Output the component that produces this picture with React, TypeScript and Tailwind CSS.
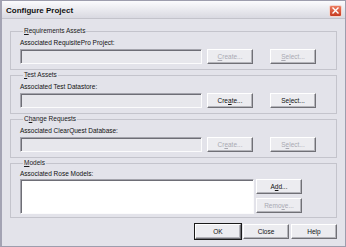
import React from "react";

const font = { fontFamily: '"Liberation Sans", Arial, sans-serif' };

function U({ t, i }: { t: string; i: number }) {
  return (
    <>
      {t.slice(0, i)}
      <span className="underline underline-offset-[1px]">{t[i]}</span>
      {t.slice(i + 1)}
    </>
  );
}

function Btn({
  children,
  disabled,
  def,
}: {
  children: React.ReactNode;
  disabled?: boolean;
  def?: boolean;
}) {
  return (
    <div
      className={`w-[46px] h-[15px] shrink-0 flex items-center justify-center bg-[#ececf0] text-[6.5px] leading-[8px] border-t border-l border-t-[#ffffff] border-l-[#ffffff] border-b border-r border-b-[#707076] border-r-[#707076] shadow-[inset_-1px_-1px_0_#b4b4ba] ${
        disabled ? "text-[#a9a9b2]" : "text-[#111]"
      } ${def ? "outline outline-1 outline-[#1a1a1a]" : ""}`}
    >
      {children}
    </div>
  );
}

function Field({ white, className = "" }: { white?: boolean; className?: string }) {
  return (
    <div
      className={`${className} border-t border-l border-t-[#a4a4ac] border-l-[#a4a4ac] border-b border-r border-b-[#fbfbfc] border-r-[#fbfbfc] shadow-[inset_1px_1px_0_#6e6e76] ${
        white ? "bg-white" : "bg-[#e7e7ec]"
      }`}
    />
  );
}

function Group({
  legend,
  children,
  className = "",
}: {
  legend: React.ReactNode;
  children: React.ReactNode;
  className?: string;
}) {
  return (
    <fieldset className={`border border-[#c4c4cc] pl-[9px] ${className}`}>
      <legend className="ml-[3px] px-[1px] text-[6.5px] leading-[8px] text-[#1a1a1a]">
        {legend}
      </legend>
      {children}
    </fieldset>
  );
}

function RowGroup({
  legend,
  label,
  create,
  select,
  disabled,
  className = "",
}: {
  legend: React.ReactNode;
  label: string;
  create: React.ReactNode;
  select: React.ReactNode;
  disabled?: boolean;
  className?: string;
}) {
  return (
    <Group legend={legend} className={`pr-[20px] pb-[5px] ${className}`}>
      <div className="mt-[4px] text-[6.5px] leading-[8px] text-[#111]">{label}</div>
      <div className="mt-[2px] flex items-start">
        <Field className="flex-1 h-[15px]" />
        <div className="ml-[5px]">
          <Btn disabled={disabled}>{create}</Btn>
        </div>
        <div className="ml-[17px]">
          <Btn disabled={disabled}>{select}</Btn>
        </div>
      </div>
    </Group>
  );
}

export default function App() {
  return (
    <div
      style={font}
      className="w-[346px] h-[247px] bg-[#e3e3ea] border border-[#9d9dad] border-l-2 border-l-[#a3a3b3] flex flex-col overflow-hidden"
    >
      <div className="h-[18px] shrink-0 flex items-center justify-between bg-gradient-to-b from-[#fbfbfd] to-[#d9d9e1] border-b border-[#c3c3cb] pl-[4px] pr-[3px]">
        <span className="text-[8px] font-bold text-[#111] leading-[10px] mt-[2px]">
          Configure Project
        </span>
        <div className="w-[13px] h-[12px] mt-[2px] rounded-[2px] border border-[#f4d6cf] bg-gradient-to-b from-[#ec7a5e] to-[#c63a20] flex items-center justify-center">
          <svg width="7" height="7" viewBox="0 0 7 7">
            <path d="M1 1 L6 6 M6 1 L1 6" stroke="#ffffff" strokeWidth="1.4" strokeLinecap="square" />
          </svg>
        </div>
      </div>

      <div className="flex flex-col pl-[8px] pr-[8px] pt-[8px]">
        <RowGroup
          legend={<U t="Requirements Assets" i={0} />}
          label="Associated RequisitePro Project:"
          create={<U t="Create..." i={0} />}
          select={<U t="Select..." i={0} />}
          disabled
        />
        <RowGroup
          className="mt-[1px]"
          legend={<U t="Test Assets" i={0} />}
          label="Associated Test Datastore:"
          create={<U t="Create..." i={3} />}
          select={<U t="Select..." i={2} />}
        />
        <RowGroup
          className="mt-[1px]"
          legend={<U t="Change Requests" i={1} />}
          label="Associated ClearQuest Database:"
          create={<U t="Create..." i={2} />}
          select={<U t="Select..." i={1} />}
          disabled
        />
        <Group legend={<U t="Models" i={0} />} className="mt-[1px] pr-[34px] pb-[3px]">
          <div className="mt-[3px] text-[6.5px] leading-[8px] text-[#111]">Associated Rose Models:</div>
          <div className="mt-[1px] flex items-start">
            <Field white className="flex-1 h-[35px]" />
            <div className="ml-[2px] flex flex-col gap-[4px]">
              <Btn>
                <U t="Add..." i={1} />
              </Btn>
              <Btn disabled>
                <U t="Remove..." i={4} />
              </Btn>
            </div>
          </div>
        </Group>
        <div className="mt-[6px] flex justify-end gap-[2px]">
          <Btn def>OK</Btn>
          <Btn>Close</Btn>
          <Btn>Help</Btn>
        </div>
      </div>
    </div>
  );
}
